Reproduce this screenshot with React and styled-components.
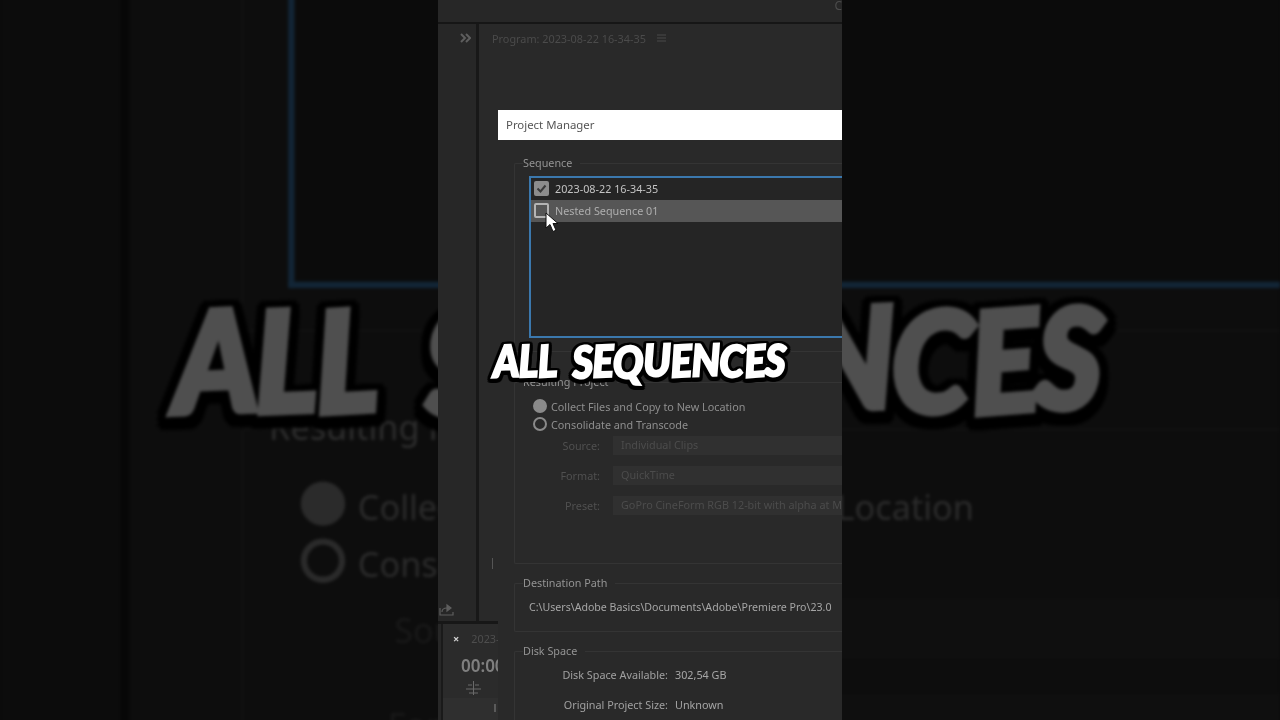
import React from 'react';
import styled, { createGlobalStyle } from 'styled-components';

const GlobalStyle = createGlobalStyle`
  html, body {
    margin: 0;
    padding: 0;
    background: #0c0c0c;
  }
  * {
    box-sizing: border-box;
  }
`;

const Page = styled.div`
  position: relative;
  width: 1280px;
  height: 720px;
  overflow: hidden;
  display: flex;
  justify-content: center;
  background: #0c0c0c;
  font-family: "Noto Sans", "Open Sans", sans-serif;
`;

/* the same frame, blown up and dimmed behind the video */
const Backdrop = styled.div`
  position: absolute;
  top: 0;
  left: 438px;
  transform: scale(3.17);
  transform-origin: 202px 361px;
  filter: brightness(0.31) blur(0.35px);
`;

const Frame = styled.div`
  position: relative;
  flex: none;
  width: 404px;
  height: 720px;
  overflow: hidden;
  display: flex;
  flex-direction: column;
  background: #292929;
  filter: blur(0.35px);
`;

const TopBar = styled.div`
  flex: none;
  height: 24px;
  display: flex;
  justify-content: flex-end;
  background: #272727;
  border-bottom: 2px solid #161616;
  color: #4c4c4c;
  font-size: 12px;
  line-height: 11px;
`;

const Panels = styled.div`
  flex: none;
  height: 597px;
  display: flex;
`;

const Rail = styled.div`
  flex: none;
  width: 38px;
  display: flex;
  flex-direction: column;
  align-items: flex-end;
  justify-content: space-between;
  padding: 9px 5px 5px 8px;
  background: #272727;
  color: #5e5e5e;
`;

const RailChevrons = styled.svg`
  width: 11px;
  height: 10px;
`;

const ExportIcon = styled.svg`
  align-self: flex-start;
  width: 15px;
  height: 13px;
  margin-left: -7px;
`;

const Divider = styled.div`
  flex: none;
  width: 3px;
  background: #181818;
`;

const Program = styled.div`
  flex: 1;
  display: flex;
  flex-direction: column;
  justify-content: space-between;
  padding: 6px 0 52px 13px;
  background: #292929;
`;

const ProgramHeader = styled.div`
  display: flex;
  align-items: center;
  gap: 11px;
  height: 16px;
  color: #4b4b4b;
  font-size: 10.85px;
`;

const MenuIcon = styled.svg`
  width: 9px;
  height: 8px;
`;

const Tick = styled.div`
  width: 1px;
  height: 11px;
  background: #555;
`;

const Lower = styled.div`
  flex: 1;
  padding-left: 3px;
  background: #272727;
  border-top: 3px solid #171717;
`;

const Timeline = styled.div`
  position: relative;
  width: 57px;
  height: 100%;
  padding: 6px 0 0 10px;
  overflow: hidden;
  background: #2b2b2b;
  border-left: 2px solid #1a1a1a;
`;

const TimelineTab = styled.div`
  display: flex;
  align-items: center;
  gap: 12px;
  height: 16px;
  white-space: nowrap;
  color: #4e4e4e;
  font-size: 10.8px;
`;

const CloseMark = styled.span`
  color: #cfcfcf;
  font-size: 11px;
  font-weight: 700;
`;

const Timecode = styled.div`
  margin: 9px 0 0 8px;
  white-space: nowrap;
  color: #7f7f7f;
  font-size: 17px;
  font-weight: 600;
  line-height: 21px;
`;

const SnapIcon = styled.svg`
  display: block;
  width: 15px;
  height: 14px;
  margin: 5px 0 0 13px;
`;

const TimelineFoot = styled.div`
  position: absolute;
  left: 0;
  right: 0;
  bottom: 0;
  height: 22px;
  display: flex;
  justify-content: flex-end;
  padding: 6px 2px 0 0;
  background: #2f2f2f;
`;

const FootMark = styled.span`
  width: 2px;
  height: 8px;
  background: #5a5a5a;
`;

const Dialog = styled.div`
  position: absolute;
  top: 110px;
  left: 60px;
  width: 420px;
  height: 640px;
  display: flex;
  flex-direction: column;
  background: #292929;
`;

const TitleBar = styled.div`
  flex: none;
  height: 30px;
  display: flex;
  align-items: center;
  padding: 0 0 1px 8px;
  background: #fff;
  color: #555;
  font-size: 11.4px;
`;

const DialogBody = styled.div`
  flex: 1;
  display: flex;
  flex-direction: column;
  gap: 12px;
  padding: 16px 0 0 16px;
`;

const Group = styled.fieldset`
  margin: 0 0 ${(p) => p.$after || 0}px;
  padding: 0;
  min-width: 0;
  height: ${(p) => p.$height}px;
  border: 1px solid #343434;
  border-right: none;
  border-radius: 2px 0 0 2px;
`;

const GroupTitle = styled.legend`
  margin-left: 8px;
  padding: 0 8px 0 0;
  color: #949494;
  font-size: 10.8px;
  line-height: 14px;
`;

const GroupBody = styled.div`
  padding: ${(p) => p.$pad};
`;

const SequenceList = styled.div`
  height: 162px;
  background: #252525;
  border: 2px solid #3b78ad;
  border-right: none;
`;

const SequenceRow = styled.div`
  display: flex;
  align-items: center;
  gap: 6px;
  height: 22px;
  padding: 0 0 1px 3px;
  background: ${(p) => (p.$hover ? '#565656' : 'transparent')};
  color: ${(p) => (p.$hover ? '#aeaeae' : '#c4c4c4')};
  font-size: 10.8px;
`;

const CheckBox = styled.span`
  flex: none;
  width: 15px;
  height: 15px;
  display: flex;
  align-items: center;
  justify-content: center;
  border-radius: 2px;
  border: 2px solid ${(p) => (p.$checked ? '#8c8c8c' : '#b4b4b4')};
  background: ${(p) => (p.$checked ? '#8c8c8c' : 'transparent')};
`;

const CheckMark = styled.svg`
  width: 11px;
  height: 11px;
`;

const RadioRow = styled.div`
  display: flex;
  align-items: center;
  gap: 4px;
  height: 18px;
  color: #8e8e8e;
  font-size: 10.8px;
  white-space: nowrap;
`;

const Radio = styled.span`
  flex: none;
  width: 14px;
  height: 14px;
  border-radius: 50%;
  border: 2px solid #8a8a8a;
  background: ${(p) => (p.$on ? '#8a8a8a' : 'transparent')};
`;

const FormStack = styled.div`
  margin-top: -3px;
`;

const FormRow = styled.div`
  display: flex;
  align-items: center;
  gap: ${(p) => p.$gap}px;
  height: 30px;
  white-space: nowrap;
  font-size: 10.8px;
`;

const FormLabel = styled.span`
  flex: none;
  width: ${(p) => p.$width}px;
  text-align: right;
  color: ${(p) => p.$color || '#505050'};
`;

const FieldBox = styled.div`
  flex: 1;
  height: 19px;
  padding-left: 8px;
  line-height: 18px;
  overflow: hidden;
  background: #303030;
  color: #4c4c4c;
`;

const PathText = styled.div`
  color: #a6a6a6;
  font-size: 10.6px;
  line-height: 16px;
  white-space: nowrap;
`;

const DiskValue = styled.span`
  color: #a6a6a6;
`;

const Cursor = styled.svg`
  position: absolute;
  left: 107px;
  top: 212px;
  width: 13px;
  height: 21px;
`;

const Caption = styled.div`
  position: absolute;
  left: 55px;
  top: 335px;
  display: flex;
  gap: 17px;
  white-space: nowrap;
  color: #fff;
  font-family: Lato, "DejaVu Sans", sans-serif;
  font-size: 44px;
  font-style: italic;
  font-weight: 900;
  line-height: 50px;
  letter-spacing: -0.6px;
  -webkit-text-stroke: 2.2px #fff;
  transform: scaleX(0.91);
  transform-origin: left center;
  filter: drop-shadow(2px 0 0 #000) drop-shadow(-2px 0 0 #000) drop-shadow(0 2px 0 #000)
    drop-shadow(0 -2px 0 #000) drop-shadow(1px 1px 0 #000) drop-shadow(-1px 1px 0 #000);
`;

const Word = styled.span`
  display: flex;
`;

const Letter = styled.span`
  display: inline-block;
  transform: translateY(${(p) => p.$y}px) rotate(${(p) => p.$r}deg);
`;

const CAPTION_WORDS = [
  [['A', 0, -2], ['L', 0, -2], ['L', 0, -3]],
  [
    ['S', 1, -3],
    ['E', 0, -2],
    ['Q', 1, 2],
    ['U', -1, -2],
    ['E', 0, -3],
    ['N', -1, -2],
    ['C', 0, 2],
    ['E', 0, -4],
    ['S', -1, 3],
  ],
];

function Shot() {
  return (
    <>
      <TopBar>C</TopBar>
      <Panels>
        <Rail>
          <RailChevrons viewBox="0 0 11 10" fill="none" stroke="currentColor" strokeWidth="2">
            <path d="M1 1l4 4-4 4M6 1l4 4-4 4" />
          </RailChevrons>
          <ExportIcon viewBox="0 0 15 13" fill="none" stroke="currentColor" strokeWidth="1.2">
            <path d="M1 5v7h13V9M3 9c0-3 2-4 5-4" />
            <path d="M8 2l4 3-4 3z" fill="currentColor" />
          </ExportIcon>
        </Rail>
        <Divider />
        <Program>
          <ProgramHeader>
            Program: 2023-08-22 16-34-35
            <MenuIcon viewBox="0 0 9 8" stroke="currentColor" strokeWidth="1.2">
              <path d="M0 1h9M0 4h9M0 7h9" />
            </MenuIcon>
          </ProgramHeader>
          <Tick />
        </Program>
      </Panels>
      <Lower>
        <Timeline>
          <TimelineTab>
            <CloseMark>×</CloseMark>
            2023-08-22
          </TimelineTab>
          <Timecode>00:00:00</Timecode>
          <SnapIcon viewBox="0 0 15 14" fill="none" stroke="#6a6a6a" strokeWidth="1">
            <path d="M7.5 0v14M2 4h4M9 4h4M0 8h15M3 12h9" />
          </SnapIcon>
          <TimelineFoot>
            <FootMark />
          </TimelineFoot>
        </Timeline>
      </Lower>

      <Dialog>
        <TitleBar>Project Manager</TitleBar>
        <DialogBody>
          <Group $height={196} $after={11}>
            <GroupTitle>Sequence</GroupTitle>
            <GroupBody $pad="6px 0 0 14px">
              <SequenceList>
                <SequenceRow>
                  <CheckBox $checked>
                    <CheckMark viewBox="0 0 11 11" fill="none" stroke="#3a3a3a" strokeWidth="2">
                      <path d="M1.5 5.5l3 3 5-6" />
                    </CheckMark>
                  </CheckBox>
                  2023-08-22 16-34-35
                </SequenceRow>
                <SequenceRow $hover>
                  <CheckBox />
                  Nested Sequence 01
                </SequenceRow>
              </SequenceList>
            </GroupBody>
          </Group>
          <Group $height={189}>
            <GroupTitle>Resulting Project</GroupTitle>
            <GroupBody $pad="8px 0 0 18px">
              <RadioRow>
                <Radio $on />
                Collect Files and Copy to New Location
              </RadioRow>
              <RadioRow>
                <Radio />
                Consolidate and Transcode
              </RadioRow>
              <FormStack>
                <FormRow $gap={13}>
                  <FormLabel $width={67}>Source:</FormLabel>
                  <FieldBox>Individual Clips</FieldBox>
                </FormRow>
                <FormRow $gap={13}>
                  <FormLabel $width={67}>Format:</FormLabel>
                  <FieldBox>QuickTime</FieldBox>
                </FormRow>
                <FormRow $gap={13}>
                  <FormLabel $width={67}>Preset:</FormLabel>
                  <FieldBox>GoPro CineForm RGB 12-bit with alpha at Maximum Bit Depth</FieldBox>
                </FormRow>
              </FormStack>
            </GroupBody>
          </Group>
          <Group $height={56}>
            <GroupTitle>Destination Path</GroupTitle>
            <GroupBody $pad="9px 0 0 14px">
              <PathText>C:\Users\Adobe Basics\Documents\Adobe\Premiere Pro\23.0</PathText>
            </GroupBody>
          </Group>
          <Group $height={100}>
            <GroupTitle>Disk Space</GroupTitle>
            <GroupBody $pad="1px 0 0 0">
              <FormRow $gap={7}>
                <FormLabel $width={153} $color="#a0a0a0">Disk Space Available:</FormLabel>
                <DiskValue>302,54 GB</DiskValue>
              </FormRow>
              <FormRow $gap={7}>
                <FormLabel $width={153} $color="#a0a0a0">Original Project Size:</FormLabel>
                <DiskValue>Unknown</DiskValue>
              </FormRow>
            </GroupBody>
          </Group>
        </DialogBody>
      </Dialog>

      <Cursor viewBox="0 0 13 21">
        <path d="M1 1v15l4-3.5 3 7 3-1.3-3-6.7h5z" fill="#fff" stroke="#111" strokeWidth="1" />
      </Cursor>
      <Caption>
        {CAPTION_WORDS.map((word, w) => (
          <Word key={w}>
            {word.map(([ch, y, r], i) => (
              <Letter key={i} $y={y} $r={r}>{ch}</Letter>
            ))}
          </Word>
        ))}
      </Caption>
    </>
  );
}

export default function App() {
  return (
    <Page>
      <GlobalStyle />
      <Backdrop>
        <Frame>
          <Shot />
        </Frame>
      </Backdrop>
      <Frame>
        <Shot />
      </Frame>
    </Page>
  );
}
